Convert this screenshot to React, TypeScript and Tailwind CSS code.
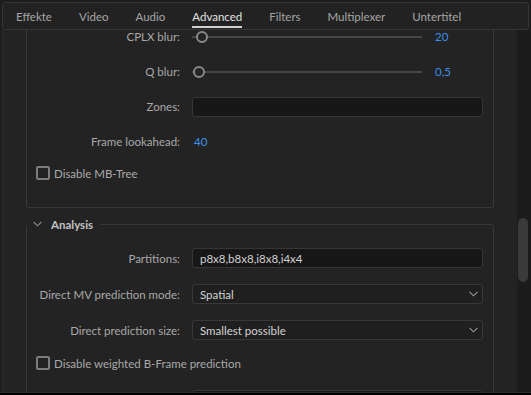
import React from "react";

const tabs = ["Effekte", "Video", "Audio", "Advanced", "Filters", "Multiplexer", "Untertitel"];

function Chevron({ className }: { className?: string }) {
  return (
    <svg width="9" height="6" viewBox="0 0 9 6" className={className}>
      <path d="M0.5 0.8 L4.5 4.8 L8.5 0.8" fill="none" stroke="currentColor" strokeWidth="1.1" />
    </svg>
  );
}

function Label({ children }: { children: React.ReactNode }) {
  return <div className="w-[153px] shrink-0 text-right text-[#a9a9a9]">{children}</div>;
}

function SliderRow({ label, value, knob }: { label: string; value: string; knob: number }) {
  return (
    <div className="flex h-[35px] items-center">
      <Label>{label}</Label>
      <div className="relative ml-[12px] flex h-[12px] w-[230px] items-center">
        <div className="h-[2px] w-full bg-[#454545]" />
        <div
          className="absolute top-0 h-[12px] w-[12px] rounded-full border-2 border-[#8a8a8a] bg-[#232323]"
          style={{ left: knob }}
        />
      </div>
      <div className="ml-[13px] text-[#3d8fe8]">{value}</div>
    </div>
  );
}

function Checkbox({ label, className }: { label: string; className?: string }) {
  return (
    <div className={`flex items-center pl-[9px] ${className ?? ""}`}>
      <div className="h-[14px] w-[14px] rounded-[2px] border-2 border-[#7c7c7c]" />
      <span className="ml-[4px] text-[#a9a9a9]">{label}</span>
    </div>
  );
}

function InputRow({ label, value }: { label: string; value?: string }) {
  return (
    <div className="flex h-[36px] items-center pr-[10px]">
      <Label>{label}</Label>
      <div className="ml-[12px] flex h-[20px] flex-1 items-center rounded-[3px] border border-[#363636] bg-[#171717] pl-[7px] text-[#d2d2d2]">
        {value}
      </div>
    </div>
  );
}

function SelectRow({ label, value }: { label: string; value: string }) {
  return (
    <div className="flex h-[36px] items-center pr-[10px]">
      <Label>{label}</Label>
      <div className="ml-[12px] flex h-[20px] flex-1 items-center justify-between rounded-[3px] border border-[#383838] bg-[#1f1f1f] pl-[7px] pr-[4px] text-[#d2d2d2]">
        <span>{value}</span>
        <Chevron className="text-[#9a9a9a]" />
      </div>
    </div>
  );
}

export default function App() {
  return (
    <div
      className="flex h-[395px] w-[531px] flex-col overflow-hidden bg-[#1d1d1d] text-[11.5px] leading-[15px]"
      style={{ fontFamily: 'Lato, "Open Sans", sans-serif' }}
    >
      {/* Tabs */}
      <div className="mx-[2px] mt-[2px] flex h-[28px] shrink-0 items-center gap-[27px] rounded-[3px] border border-[#363636] bg-[#222222] pl-[13px] pt-[1px]">
        {tabs.map((t) => (
          <div key={t} className="relative">
            <span className={t === "Advanced" ? "text-[#e2e2e2]" : "text-[#a6a6a6]"}>{t}</span>
            {t === "Advanced" && (
              <div className="absolute left-0 right-0 top-[17px] h-[2px] bg-[#d0d0d0]" />
            )}
          </div>
        ))}
      </div>

      <div className="flex min-h-0 flex-1">
        {/* Scroll content */}
        <div className="ml-[2px] flex-1 overflow-hidden border-l border-[#2c2c2c] bg-[#232323] pl-[23px] pr-[23px]">
          {/* Rate control group, scrolled */}
          <div className="-mt-[11px] rounded-b-[3px] border-x border-b border-[#383838] pb-[20px]">
            <SliderRow label="CPLX blur:" value="20" knob={4} />
            <SliderRow label="Q blur:" value="0,5" knob={1} />
            <div className="flex h-[35px] items-center pr-[10px]">
              <Label>Zones:</Label>
              <div className="ml-[12px] h-[20px] flex-1 rounded-[3px] border border-[#363636] bg-[#171717]" />
            </div>
            <div className="flex h-[35px] items-center">
              <Label>Frame lookahead:</Label>
              <div className="ml-[14px] text-[#3d8fe8]">40</div>
            </div>
            <Checkbox label="Disable MB-Tree" className="h-[28px]" />
          </div>

          {/* Analysis */}
          <fieldset className="mt-[8px] rounded-[3px] border border-[#383838]">
            <legend className="px-0">
              <span className="flex h-[16px] items-center pl-[6px] pr-[7px]">
                <Chevron className="text-[#8e8e8e]" />
                <span className="ml-[9px] font-bold text-[#c4c4c4]">Analysis</span>
              </span>
            </legend>
            <div className="pt-[8px]">
              <InputRow label="Partitions:" value="p8x8,b8x8,i8x8,i4x4" />
              <SelectRow label="Direct MV prediction mode:" value="Spatial" />
              <SelectRow label="Direct prediction size:" value="Smallest possible" />
              <Checkbox label="Disable weighted B-Frame prediction" className="h-[30px]" />
              <div className="flex items-center pr-[10px] pt-[12px]">
                <div className="w-[153px]" />
                <div className="ml-[12px] h-[20px] flex-1 rounded-[3px] border border-[#363636] bg-[#171717]" />
              </div>
            </div>
          </fieldset>
        </div>

        {/* Scrollbar */}
        <div className="w-[14px] shrink-0 bg-[#1c1c1c] pl-[1px] pt-[188px]">
          <div className="h-[64px] w-[10px] rounded-full bg-[#3a3a3a]" />
        </div>
      </div>

      <div className="h-[3px] shrink-0 border-t border-[#2e2e2e] bg-black" />
    </div>
  );
}
